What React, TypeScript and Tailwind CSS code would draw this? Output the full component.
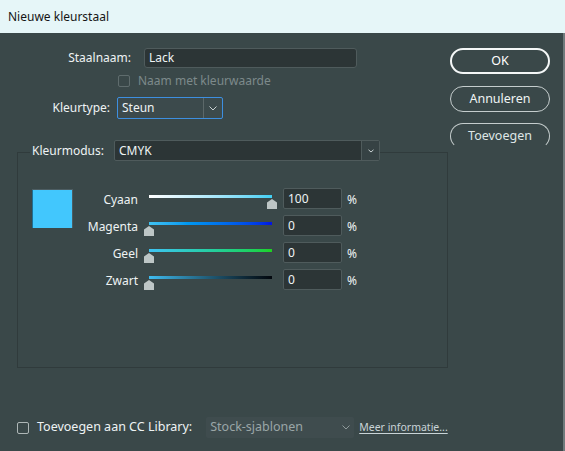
import React from "react";

const font = { fontFamily: '"Noto Sans", "Open Sans", sans-serif' };

function Chevron({ color = "#c9d1d2", small = false }: { color?: string; small?: boolean }) {
  if (small) {
    return (
      <svg width="6" height="4" viewBox="0 0 6 4">
        <polyline points="0.5,0.8 3,3 5.5,0.8" fill="none" stroke={color} strokeWidth="1" />
      </svg>
    );
  }
  return (
    <svg width="8" height="5" viewBox="0 0 8 5">
      <polyline points="0.5,0.5 4,4 7.5,0.5" fill="none" stroke={color} strokeWidth="1" />
    </svg>
  );
}

function Thumb() {
  return (
    <svg width="10" height="10" viewBox="0 0 10 10">
      <polygon points="5,0 10,3.5 10,10 0,10 0,3.5" fill="#bdc6c6" />
    </svg>
  );
}

const sliders = [
  { name: "Cyaan", value: 100, grad: "bg-linear-to-r from-[#ffffff] to-[#3fd0f4]" },
  { name: "Magenta", value: 0, grad: "bg-linear-to-r from-[#3fc3f2] to-[#0510e4]" },
  { name: "Geel", value: 0, grad: "bg-linear-to-r from-[#3fc3f2] to-[#1ed21e]" },
  { name: "Zwart", value: 0, grad: "bg-linear-to-r from-[#3fbcf0] to-[#03080e]" },
];

export default function App() {
  return (
    <div
      className="w-[565px] h-[451px] flex flex-col bg-[#3a4849] text-[12px] text-[#eef3f4] overflow-hidden"
      style={font}
    >
      {/* title bar */}
      <div className="h-[33px] shrink-0 flex items-center pl-[8px] bg-[#e6f6f8] text-[#151515] text-[12px]">
        Nieuwe kleurstaal
      </div>

      <div className="flex-1 flex flex-col border-r-2 border-[#6f7b7c]">
        <div className="flex pt-[15px]">
          {/* left column */}
          <div className="w-[450px] flex flex-col">
            {/* Staalnaam */}
            <div className="flex items-center h-[20px]">
              <div className="w-[131px] text-right">Staalnaam:</div>
              <div className="ml-[13px] w-[213px] h-[20px] rounded-[3px] border border-[#4f5b5c] bg-[#2c3536] flex items-center pl-[4px]">
                Lack
              </div>
            </div>
            {/* checkbox */}
            <div className="flex items-center mt-[7px] ml-[118px] h-[12px]">
              <div className="w-[12px] h-[12px] border border-[#5f6c6d] rounded-[2px]" />
              <span className="ml-[8px] text-[#7d8a8b]">Naam met kleurwaarde</span>
            </div>
            {/* Kleurtype */}
            <div className="flex items-center mt-[10px] h-[22px]">
              <div className="w-[110px] text-right">Kleurtype:</div>
              <div className="ml-[7px] w-[106px] h-[22px] rounded-[2px] border border-[#3d8fe0] bg-[#3c4a4c] flex items-center">
                <span className="flex-1 pl-[4px]">Steun</span>
                <div className="w-[19px] h-full border-l border-[#5c6869] flex items-center justify-center">
                  <Chevron />
                </div>
              </div>
            </div>

            {/* group box */}
            <div className="mt-[33px] ml-[17px] w-[431px] h-[216px] border border-[#303b3c] flex flex-col">
              <div className="-mt-[13px] flex items-center h-[21px]">
                <div className="ml-[12px] pl-[2px] w-[84px] h-full bg-[#3a4849] flex items-center">
                  Kleurmodus:
                </div>
                <div className="w-[266px] h-[21px] rounded-[2px] border border-[#4f5b5c] bg-[#2c3536] flex items-center">
                  <span className="flex-1 pl-[4px]">CMYK</span>
                  <div className="w-[18px] h-full border-l border-[#4f5b5c] bg-[#364244] flex items-center justify-center">
                    <Chevron small />
                  </div>
                </div>
              </div>

              <div className="mt-[27px] ml-[14px] flex items-start">
                <div className="mt-[1px] w-[41px] h-[39px] bg-[#42c7fd] border-t border-r border-[#4d5d62] flex">
                  <div className="w-[1px] h-full bg-[#1d6f95]" />
                </div>
                <div className="flex flex-col gap-[6px]">
                  {sliders.map((s) => (
                    <div key={s.name} className="flex items-start h-[21px]">
                      <div className="w-[65px] text-right h-[21px] flex items-center justify-end pt-[2px]">
                        {s.name}
                      </div>
                      <div className="ml-[11px] w-[123px] h-[21px] relative">
                        <div className={`mt-[7px] h-[3px] w-full ${s.grad}`} />
                        <div
                          className="absolute top-[11px]"
                          style={{ left: `${(s.value / 100) * 123 - 5}px` }}
                        >
                          <Thumb />
                        </div>
                      </div>
                      <div className="ml-[11px] w-[59px] h-[21px] rounded-[2px] border border-[#4f5b5c] bg-[#2c3536] flex items-center pl-[4px]">
                        {s.value}
                      </div>
                      <div className="ml-[5px] h-[21px] flex items-center pt-[2px]">%</div>
                    </div>
                  ))}
                </div>
              </div>
            </div>
          </div>

          {/* right column buttons */}
          <div className="w-[100px] flex flex-col">
            <div className="h-[26px] rounded-full border-2 border-[#f4f7f7] flex items-center justify-center text-[12.5px] text-white">
              OK
            </div>
            <div className="mt-[12px] h-[26px] rounded-full border border-[#c5cdcd] flex items-center justify-center text-[12.5px] text-[#f0f4f4]">
              Annuleren
            </div>
            <div className="mt-[11px] h-[26px] rounded-full border border-[#c5cdcd] border-b-transparent flex items-center justify-center text-[12.5px] text-[#dfe6e6]">
              Toevoegen
            </div>
          </div>
        </div>

        {/* bottom row */}
        <div className="mt-[49px] flex items-center h-[21px]">
          <div className="ml-[17px] w-[12px] h-[12px] border border-[#aeb7b7] rounded-[2px]" />
          <span className="ml-[8px] text-[12.5px]">Toevoegen aan CC Library:</span>
          <div className="ml-[14px] w-[148px] h-[21px] rounded-[2px] bg-[#3f4c4e] flex items-center">
            <span className="flex-1 pl-[4px] text-[#9aa6a7] text-[12.5px]">Stock-sjablonen</span>
            <div className="w-[14px] flex items-center justify-center mr-[1px]">
              <Chevron color="#8f9a9b" />
            </div>
          </div>
          <span className="ml-[5px] text-[10.5px] text-[#c9d4d7] underline underline-offset-2">Meer informatie...</span>
        </div>
      </div>
    </div>
  );
}
